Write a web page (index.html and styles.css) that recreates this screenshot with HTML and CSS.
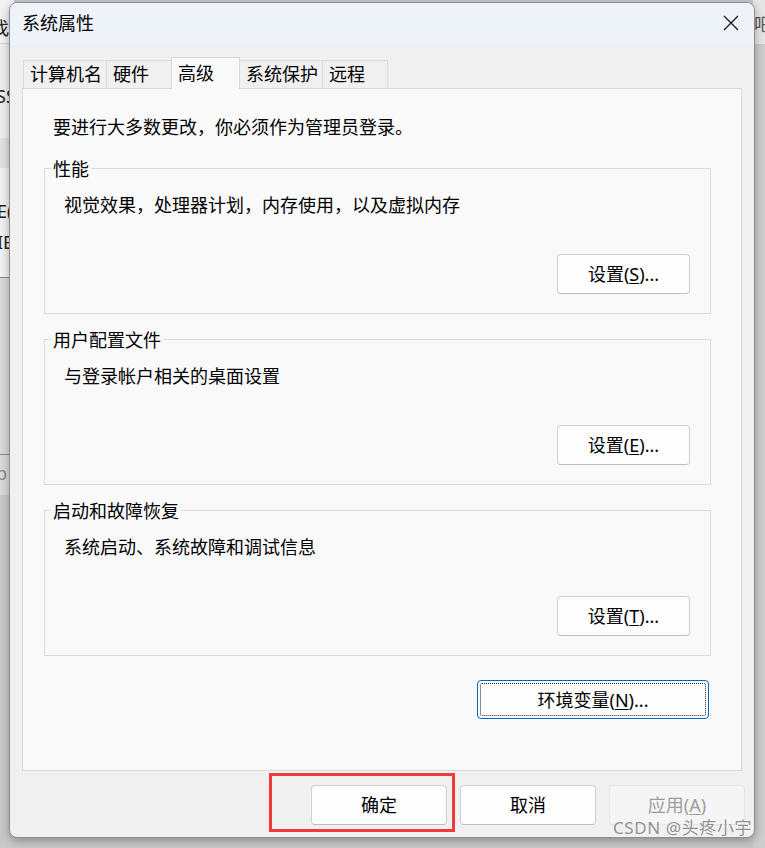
FILE: index.html
```html
<!DOCTYPE html>
<html lang="zh-CN">
<head>
    <meta charset="UTF-8">
    <meta name="viewport" content="width=device-width, initial-scale=1.0">
    <title>系统属性</title>
    <link rel="stylesheet" href="styles.css">
</head>
<body>
    <div class="screen">
        <!-- windows behind the dialog -->
        <div class="backdrop backdrop-left">
            <div class="bd bd-a"><span class="bd-text">找</span></div>
            <div class="bd bd-b"><span class="bd-text bd-ss">SS</span></div>
            <div class="bd bd-c"></div>
            <div class="bd bd-d">
                <span class="bd-text bd-e1">E(</span>
                <span class="bd-text bd-e2">IE</span>
            </div>
            <div class="bd bd-e"></div>
            <div class="bd bd-f"><span class="bd-text bd-p">p</span></div>
        </div>
        <div class="backdrop backdrop-right">
            <div class="bd-r-top"><span class="bd-text">吧</span></div>
        </div>

        <div class="dialog">
            <div class="titlebar">
                <span class="title">系统属性</span>
                <button class="close" aria-label="关闭">
                    <svg width="16" height="16" viewBox="0 0 16 16">
                        <path d="M1 1 L15 15 M15 1 L1 15" stroke="#1a1a1a" stroke-width="1.3" fill="none"/>
                    </svg>
                </button>
            </div>

            <div class="dialog-body">
                <div class="tabs">
                    <div class="tab">计算机名</div>
                    <div class="tab">硬件</div>
                    <div class="tab tab-active">高级</div>
                    <div class="tab">系统保护</div>
                    <div class="tab">远程</div>
                </div>

                <div class="panel">
                    <p class="intro">要进行大多数更改，你必须作为管理员登录。</p>

                    <div class="group">
                        <div class="group-title">性能</div>
                        <p class="group-desc">视觉效果，处理器计划，内存使用，以及虚拟内存</p>
                        <button class="btn btn-group">设置(<u>S</u>)...</button>
                    </div>

                    <div class="group">
                        <div class="group-title">用户配置文件</div>
                        <p class="group-desc">与登录帐户相关的桌面设置</p>
                        <button class="btn btn-group">设置(<u>E</u>)...</button>
                    </div>

                    <div class="group">
                        <div class="group-title">启动和故障恢复</div>
                        <p class="group-desc">系统启动、系统故障和调试信息</p>
                        <button class="btn btn-group">设置(<u>T</u>)...</button>
                    </div>

                    <button class="btn btn-env">环境变量(<u>N</u>)...</button>
                </div>

                <div class="footer">
                    <button class="btn btn-footer">确定</button>
                    <button class="btn btn-footer">取消</button>
                    <button class="btn btn-footer btn-disabled">应用(<u>A</u>)</button>
                </div>
            </div>
        </div>

        <div class="highlight"></div>
        <div class="watermark">CSDN @头疼小宇</div>
    </div>
</body>
</html>
```

FILE: styles.css
```css
body {
    margin: 0;
    padding: 0;
    background: #c9c9c9;
    font-family: "Noto Sans", "Noto Sans CJK SC", sans-serif;
    color: #000;
}

.screen {
    position: relative;
    width: 765px;
    height: 848px;
    overflow: hidden;
    box-sizing: border-box;
    padding: 2px 0 0 9px;
}

/* windows behind the dialog */
.backdrop {
    position: absolute;
    top: 0;
    overflow: hidden;
}

.backdrop-left {
    left: 0;
    width: 14px;
    display: flex;
    flex-direction: column;
}

.bd {
    position: relative;
    overflow: hidden;
}

.bd-text {
    position: absolute;
    font-size: 18px;
    line-height: 24px;
    color: #222;
    white-space: nowrap;
}

.bd-a {
    height: 43px;
    background: #f3f3f3;
    border-bottom: 1px solid #d2d2d2;
}

.bd-a .bd-text {
    top: 16px;
    left: -9px;
}

.bd-b {
    height: 94px;
    background: #efefef;
}

.bd-ss {
    top: 40px;
    left: -4px;
}

.bd-c {
    height: 30px;
    background: #e3e3e3;
}

.bd-d {
    height: 109px;
    background: #f2f2f2;
    border-bottom: 1px solid #8c8c8c;
}

.bd-e1 {
    top: 31px;
    left: -3px;
}

.bd-e2 {
    top: 62px;
    left: -3px;
}

.bd-e {
    height: 176px;
    background: #d9d9d9;
    border-bottom: 1px solid #8c8c8c;
}

.bd-f {
    height: 40px;
    background: #dadada;
}

.bd-p {
    top: 6px;
    left: -4px;
    color: #8a8a8a;
}

.backdrop-right {
    right: 0;
    width: 12px;
    height: 848px;
    background: #cdcdcd;
}

.bd-r-top {
    position: relative;
    height: 44px;
    background: #e6e6e6;
}

.bd-r-top .bd-text {
    top: 12px;
    left: 1px;
    color: #555;
}

/* dialog */
.dialog {
    position: relative;
    z-index: 1;
    width: 746px;
    height: 836px;
    box-sizing: border-box;
    border: 1px solid #8e8e8e;
    border-radius: 8px;
    background: #f0f0f0;
    box-shadow: 0 3px 10px rgba(0, 0, 0, 0.3);
    overflow: hidden;
    display: flex;
    flex-direction: column;
}

.titlebar {
    height: 42px;
    flex-shrink: 0;
    background: #eef3f9;
    display: flex;
    align-items: center;
    justify-content: space-between;
    padding-left: 12px;
}

.title {
    font-size: 18px;
    line-height: 24px;
    margin-top: -2px;
}

.close {
    width: 46px;
    height: 42px;
    border: 0;
    padding: 0;
    background: transparent;
    display: flex;
    align-items: center;
    justify-content: center;
    margin-top: -2px;
}

.dialog-body {
    flex: 1;
    padding: 12px 12px 0 12px;
    display: flex;
    flex-direction: column;
}

/* tabs */
.tabs {
    display: flex;
    align-items: flex-end;
    height: 31px;
    margin-left: 1px;
    position: relative;
    z-index: 1;
}

.tab {
    height: 28px;
    min-width: 66px;
    box-sizing: border-box;
    border: 1px solid #d9d9d9;
    border-bottom: 0;
    background: #f0f0f0;
    padding: 0 4px 0 6px;
    font-size: 18px;
    line-height: 27px;
    white-space: nowrap;
}

.tab + .tab {
    margin-left: -1px;
}

.tab-active {
    height: 32px;
    min-width: 69px;
    margin-bottom: -1px;
    background: #f9f9f9;
    line-height: 30px;
    position: relative;
}

/* panel */
.panel {
    height: 683px;
    box-sizing: border-box;
    border: 1px solid #d9d9d9;
    background: #f9f9f9;
    padding: 26px 30px 0 21px;
}

.intro {
    margin: 0;
    padding-left: 9px;
    font-size: 18px;
    line-height: 24px;
}

.group {
    margin-top: 29px;
    height: 146px;
    box-sizing: border-box;
    border: 1px solid #dcdcdc;
    display: flex;
    flex-direction: column;
    align-items: flex-start;
}

.group + .group {
    margin-top: 25px;
}

.group-title {
    margin: -12px 0 0 6px;
    padding: 0 2px;
    background: #f9f9f9;
    font-size: 18px;
    line-height: 24px;
}

.group-desc {
    margin: 12px 0 0 19px;
    font-size: 18px;
    line-height: 24px;
}

.btn {
    font-family: inherit;
    font-size: 18px;
    line-height: 24px;
    color: #000;
    height: 40px;
    padding: 0;
    box-sizing: border-box;
    border: 1px solid #d0d0d0;
    border-bottom-color: #bdbdbd;
    border-radius: 4px;
    background: #fdfdfd;
}

.btn u {
    text-underline-offset: 2px;
}

.btn-group {
    width: 133px;
    margin: auto 20px 19px auto;
}

.btn-env {
    display: block;
    position: relative;
    width: 232px;
    height: 39px;
    margin: 24px 2px 0 auto;
    border: 1px solid #0067c0;
}

.btn-env::after {
    content: "";
    position: absolute;
    inset: 2px;
    border: 1px dotted #222;
    border-radius: 2px;
}

/* footer buttons */
.footer {
    display: flex;
    justify-content: flex-end;
    gap: 13px;
    margin: 14px -3px 0 0;
}

.btn-footer {
    width: 136px;
}

.btn-disabled {
    background: #f5f5f5;
    border-color: #e5e5e5;
    color: #9d9d9d;
}

/* annotation on the screenshot */
.highlight {
    position: absolute;
    z-index: 2;
    left: 269px;
    top: 773px;
    width: 186px;
    height: 59px;
    box-sizing: border-box;
    border: 3px solid #f03a3c;
}

.watermark {
    position: absolute;
    z-index: 2;
    left: 613px;
    top: 816px;
    font-size: 17px;
    line-height: 24px;
    letter-spacing: 0.6px;
    color: rgba(125, 125, 125, 0.85);
    text-shadow: 0 0 2px rgba(255, 255, 255, 0.8);
    white-space: nowrap;
}
```
